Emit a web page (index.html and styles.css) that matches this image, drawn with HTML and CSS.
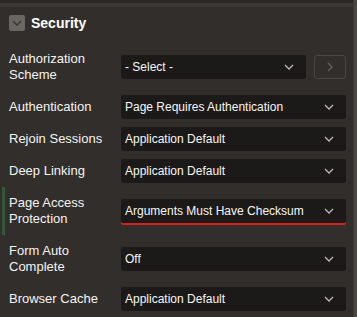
FILE: index.html
```html
<!DOCTYPE html>
<html>
<head>
<meta charset="utf-8">
<link rel="stylesheet" href="styles.css">
</head>
<body>
<div class="frame">
  <div class="panel">
    <div class="topband"></div>
    <div class="header">
      <span class="toggle">
        <svg width="10" height="6" viewBox="0 0 10 6"><path d="M1 1 L5 5 L9 1" fill="none" stroke="#3b3734" stroke-width="1.6"/></svg>
      </span>
      <span class="title">Security</span>
    </div>
    <div class="rows">
      <div class="row">
        <div class="label">Authorization Scheme</div>
        <div class="field">
          <div class="select">- Select -<svg class="chev" width="10" height="6" viewBox="0 0 10 6"><path d="M1 1 L5 5 L9 1" fill="none" stroke="#bdb8b3" stroke-width="1.3"/></svg></div>
          <div class="btn"><svg width="6" height="10" viewBox="0 0 6 10"><path d="M1 1 L5 5 L1 9" fill="none" stroke="#65605c" stroke-width="1.4"/></svg></div>
        </div>
      </div>
      <div class="row">
        <div class="label">Authentication</div>
        <div class="field">
          <div class="select">Page Requires Authentication<svg class="chev" width="10" height="6" viewBox="0 0 10 6"><path d="M1 1 L5 5 L9 1" fill="none" stroke="#bdb8b3" stroke-width="1.3"/></svg></div>
        </div>
      </div>
      <div class="row">
        <div class="label">Rejoin Sessions</div>
        <div class="field">
          <div class="select">Application Default<svg class="chev" width="10" height="6" viewBox="0 0 10 6"><path d="M1 1 L5 5 L9 1" fill="none" stroke="#bdb8b3" stroke-width="1.3"/></svg></div>
        </div>
      </div>
      <div class="row">
        <div class="label">Deep Linking</div>
        <div class="field">
          <div class="select">Application Default<svg class="chev" width="10" height="6" viewBox="0 0 10 6"><path d="M1 1 L5 5 L9 1" fill="none" stroke="#bdb8b3" stroke-width="1.3"/></svg></div>
        </div>
      </div>
      <div class="row row-active">
        <div class="label">Page Access Protection</div>
        <div class="field">
          <div class="select select-error">Arguments Must Have Checksum<svg class="chev" width="10" height="6" viewBox="0 0 10 6"><path d="M1 1 L5 5 L9 1" fill="none" stroke="#bdb8b3" stroke-width="1.3"/></svg></div>
        </div>
      </div>
      <div class="row">
        <div class="label">Form Auto Complete</div>
        <div class="field">
          <div class="select">Off<svg class="chev" width="10" height="6" viewBox="0 0 10 6"><path d="M1 1 L5 5 L9 1" fill="none" stroke="#bdb8b3" stroke-width="1.3"/></svg></div>
        </div>
      </div>
      <div class="row">
        <div class="label">Browser Cache</div>
        <div class="field">
          <div class="select">Application Default<svg class="chev" width="10" height="6" viewBox="0 0 10 6"><path d="M1 1 L5 5 L9 1" fill="none" stroke="#bdb8b3" stroke-width="1.3"/></svg></div>
        </div>
      </div>
    </div>
  </div>
  <div class="scrollstrip"></div>
</div>
</body>
</html>
```

FILE: styles.css
```css
html, body {
  margin: 0;
  padding: 0;
  background: #322e2b;
}
body {
  width: 357px;
  height: 317px;
  overflow: hidden;
  font-family: "Liberation Sans", Arial, sans-serif;
  color: #f3f3f3;
}
.frame {
  display: flex;
  height: 317px;
}
.panel {
  flex: 1;
  background: #322e2b;
}
.scrollstrip {
  width: 3px;
  background: #4a4642;
  border-left: 1px solid #3c3835;
}
.topband {
  height: 4px;
  border-top: 3px solid #2a2725;
  background: #3b3734;
}
.header {
  display: flex;
  align-items: center;
  padding: 8px 9px 12px;
  height: 16px;
}
.toggle {
  width: 16px;
  height: 16px;
  border-radius: 2px;
  background: #6b6661;
  display: flex;
  align-items: center;
  justify-content: center;
}
.title {
  margin-left: 6px;
  font-size: 14px;
  font-weight: bold;
  color: #ffffff;
  line-height: 16px;
}
.rows {
  display: flex;
  flex-direction: column;
}
.row {
  display: flex;
  align-items: center;
  position: relative;
}
.row-active::before {
  content: "";
  position: absolute;
  left: 2px;
  top: 0;
  bottom: 0;
  width: 3px;
  background: #35573b;
}
.label {
  flex: 0 0 auto;
  width: 104px;
  padding: 8px 8px 8px 9px;
  font-size: 13px;
  line-height: 16px;
  color: #f4f4f4;
}
.field {
  flex: 1;
  display: flex;
  gap: 8px;
  margin-right: 7px;
}
.select {
  flex: 1;
  height: 24px;
  box-sizing: border-box;
  background: #1c1a19;
  border-radius: 2px;
  display: flex;
  align-items: center;
  justify-content: space-between;
  padding: 0 12px 0 4px;
  font-size: 12px;
  color: #f6f6f6;
}
.select-error {
  box-shadow: 0 2px 0 #d81f1b;
}
.chev {
  display: block;
}
.btn {
  width: 32px;
  height: 24px;
  box-sizing: border-box;
  border: 1px solid #4b4643;
  border-radius: 3px;
  display: flex;
  align-items: center;
  justify-content: center;
}
```
